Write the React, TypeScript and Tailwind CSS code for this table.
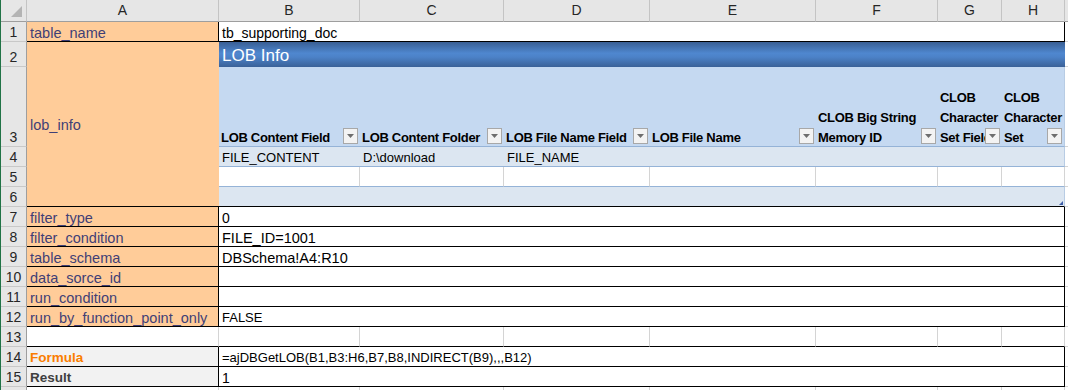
import type { ReactNode } from "react";

type CellProps = { children?: ReactNode; className?: string };

const letters = ["A", "B", "C", "D", "E", "F", "G", "H"];

function ColHead({ children, className = "" }: CellProps) {
  return (
    <div className={`flex items-center justify-center bg-[#e6e6e6] border-r border-b border-r-[#c4c4c4] border-b-[#9e9e9e] text-[14px] text-[#262626] ${className}`}>
      {children}
    </div>
  );
}

function RowHead({ n }: { n?: number }) {
  return (
    <div className="flex items-end justify-center leading-[17px] bg-[#e6e6e6] border-r border-b border-r-[#9e9e9e] border-b-[#c8c8c8] text-[14px] text-[#262626]">
      {n}
    </div>
  );
}

function Cell({ children, className = "" }: CellProps) {
  return (
    <div className={`flex items-end px-[3px] leading-[16px] whitespace-nowrap overflow-hidden ${className}`}>
      {children}
    </div>
  );
}

function Label({ children }: CellProps) {
  return (
    <Cell className="bg-[#ffcc99] text-[14.5px] text-[#3f3f76] border-r border-b border-black">{children}</Cell>
  );
}

function Value({ children, size = "text-[14px]" }: CellProps & { size?: string }) {
  return (
    <Cell className={`col-span-7 bg-white text-black border-r border-b border-black ${size}`}>{children}</Cell>
  );
}

function Spare({ className = "" }: CellProps) {
  return <div className={`bg-white border-b border-[#d4d4d4] ${className}`} />;
}

function FilterButton() {
  return (
    <div className="absolute right-[2px] bottom-[2px] w-[15px] h-[16px] flex items-center justify-center bg-[#f3f3f3] border border-[#a8a8a8]">
      <svg width="7" height="4" viewBox="0 0 7 4">
        <polygon points="0,0 7,0 3.5,4" fill="#6e6e6e" />
      </svg>
    </div>
  );
}

function HeaderCell({ children, last }: CellProps & { last?: boolean }) {
  return (
    <div className={`relative flex items-end pl-[2px] pr-0 bg-[#c5d9f1] border-b border-[#95b3d7] ${last ? "border-r border-r-[#b8cce4]" : "overflow-hidden"}`}>
      <div className="translate-y-[2px] text-[13px] font-bold leading-[20px] tracking-[-0.3px] text-black whitespace-normal">
        {children}
      </div>
      <FilterButton />
    </div>
  );
}

export default function App() {
  const header = [
    "LOB Content Field",
    "LOB Content Folder",
    "LOB File Name Field",
    "LOB File Name",
    "CLOB Big String Memory ID",
    "CLOB Character Set Field",
    "CLOB Character Set",
  ];
  const row4 = ["FILE_CONTENT", "D:\\download", "FILE_NAME", "", "", "", ""];
  const settings: [number, string, string, string][] = [
    [7, "filter_type", "0", "text-[14px]"],
    [8, "filter_condition", "FILE_ID=1001", "text-[14.5px]"],
    [9, "table_schema", "DBSchema!A4:R10", "text-[14.5px]"],
    [10, "data_sorce_id", "", "text-[14px]"],
    [11, "run_condition", "", "text-[14px]"],
    [12, "run_by_function_point_only", "FALSE", "text-[13px]"],
  ];

  return (
    <div className="flex w-[1068px] h-[390px] overflow-hidden bg-white font-['Liberation_Sans',Arial,sans-serif]">
      <div className="w-px shrink-0 bg-[#217346]" />
      <div className="grid flex-1 grid-cols-[26px_192px_141px_144px_146px_166px_122px_64px_63px_1fr] grid-rows-[22px_20px_25px_80px_repeat(13,20px)]">
        {/* column headers */}
        <div className="relative bg-[#e6e6e6] border-r border-b border-r-[#c4c4c4] border-b-[#9e9e9e]">
          <svg className="absolute right-[4px] bottom-[4px]" width="11" height="11" viewBox="0 0 11 11">
            <polygon points="11,0 11,11 0,11" fill="#b4b4b4" />
          </svg>
        </div>
        {letters.map((l) => (
          <ColHead key={l}>{l}</ColHead>
        ))}
        <ColHead className="border-r-0" />

        {/* row 1 */}
        <RowHead n={1} />
        <Label>table_name</Label>
        <Value>tb_supporting_doc</Value>
        <Spare />

        {/* row 2: merged label + table title */}
        <RowHead n={2} />
        <div className="row-span-5 flex items-center px-[3px] pt-[3px] bg-[#ffcc99] text-[14.5px] text-[#3f3f76] border-b border-black">
          lob_info
        </div>
        <div className="col-span-7 flex items-center px-[3px] pt-[3px] bg-[linear-gradient(to_bottom,#395f94,#4f87cf_45%,#4c82c8_60%,#3a6198)] text-[17px] text-white">
          LOB Info
        </div>
        <Spare />

        {/* row 3: table headers */}
        <RowHead n={3} />
        {header.map((h, i) => (
          <HeaderCell key={h} last={i === header.length - 1}>
            {h}
          </HeaderCell>
        ))}
        <Spare />

        {/* row 4 */}
        <RowHead n={4} />
        {row4.map((v, i) => (
          <Cell
            key={i}
            className={`bg-[#dce6f1] text-[13px] text-black border-b border-[#95b3d7] ${i === 6 ? "border-r border-r-[#b8cce4]" : ""}`}
          >
            {v}
          </Cell>
        ))}
        <Spare />

        {/* row 5 */}
        <RowHead n={5} />
        {row4.map((_, i) => (
          <div key={i} className="bg-white border-r border-b border-r-[#d4d4d4] border-b-[#95b3d7]" />
        ))}
        <Spare />

        {/* row 6 */}
        <RowHead n={6} />
        {row4.map((_, i) => (
          <div
            key={i}
            className={`relative bg-[#dce6f1] border-b border-black ${i === 6 ? "border-r border-r-[#b8cce4]" : ""}`}
          >
            {i === 6 && (
              <svg className="absolute right-[1px] bottom-[1px]" width="4" height="4" viewBox="0 0 4 4">
                <polygon points="4,0 4,4 0,4" fill="#3d5da8" />
              </svg>
            )}
          </div>
        ))}
        <Spare />

        {/* rows 7-12 */}
        {settings.map(([n, label, value, size]) => (
          <div key={n} className="contents">
            <RowHead n={n} />
            <Label>{label}</Label>
            <Value size={size}>{value}</Value>
            <Spare />
          </div>
        ))}

        {/* row 13 */}
        <RowHead n={13} />
        {letters.map((l) => (
          <div key={l} className="bg-white border-r border-b border-r-[#d4d4d4] border-b-black" />
        ))}
        <Spare />

        {/* row 14 */}
        <RowHead n={14} />
        <Cell className="bg-[#f2f2f2] text-[13.5px] font-bold text-[#fa7d00] border-r border-b border-black">Formula</Cell>
        <Value size="text-[13px]">=ajDBGetLOB(B1,B3:H6,B7,B8,INDIRECT(B9),,,B12)</Value>
        <Spare />

        {/* row 15 */}
        <RowHead n={15} />
        <Cell className="bg-[#f2f2f2] text-[13.5px] font-bold text-[#3f3f3f] border-r border-b border-black">Result</Cell>
        <Value>1</Value>
        <Spare />

        {/* row 16, only its top edge shows */}
        <RowHead />
        {letters.map((l) => (
          <div key={l} className="bg-white border-r border-b border-[#d4d4d4]" />
        ))}
        <Spare />
      </div>
    </div>
  );
}
